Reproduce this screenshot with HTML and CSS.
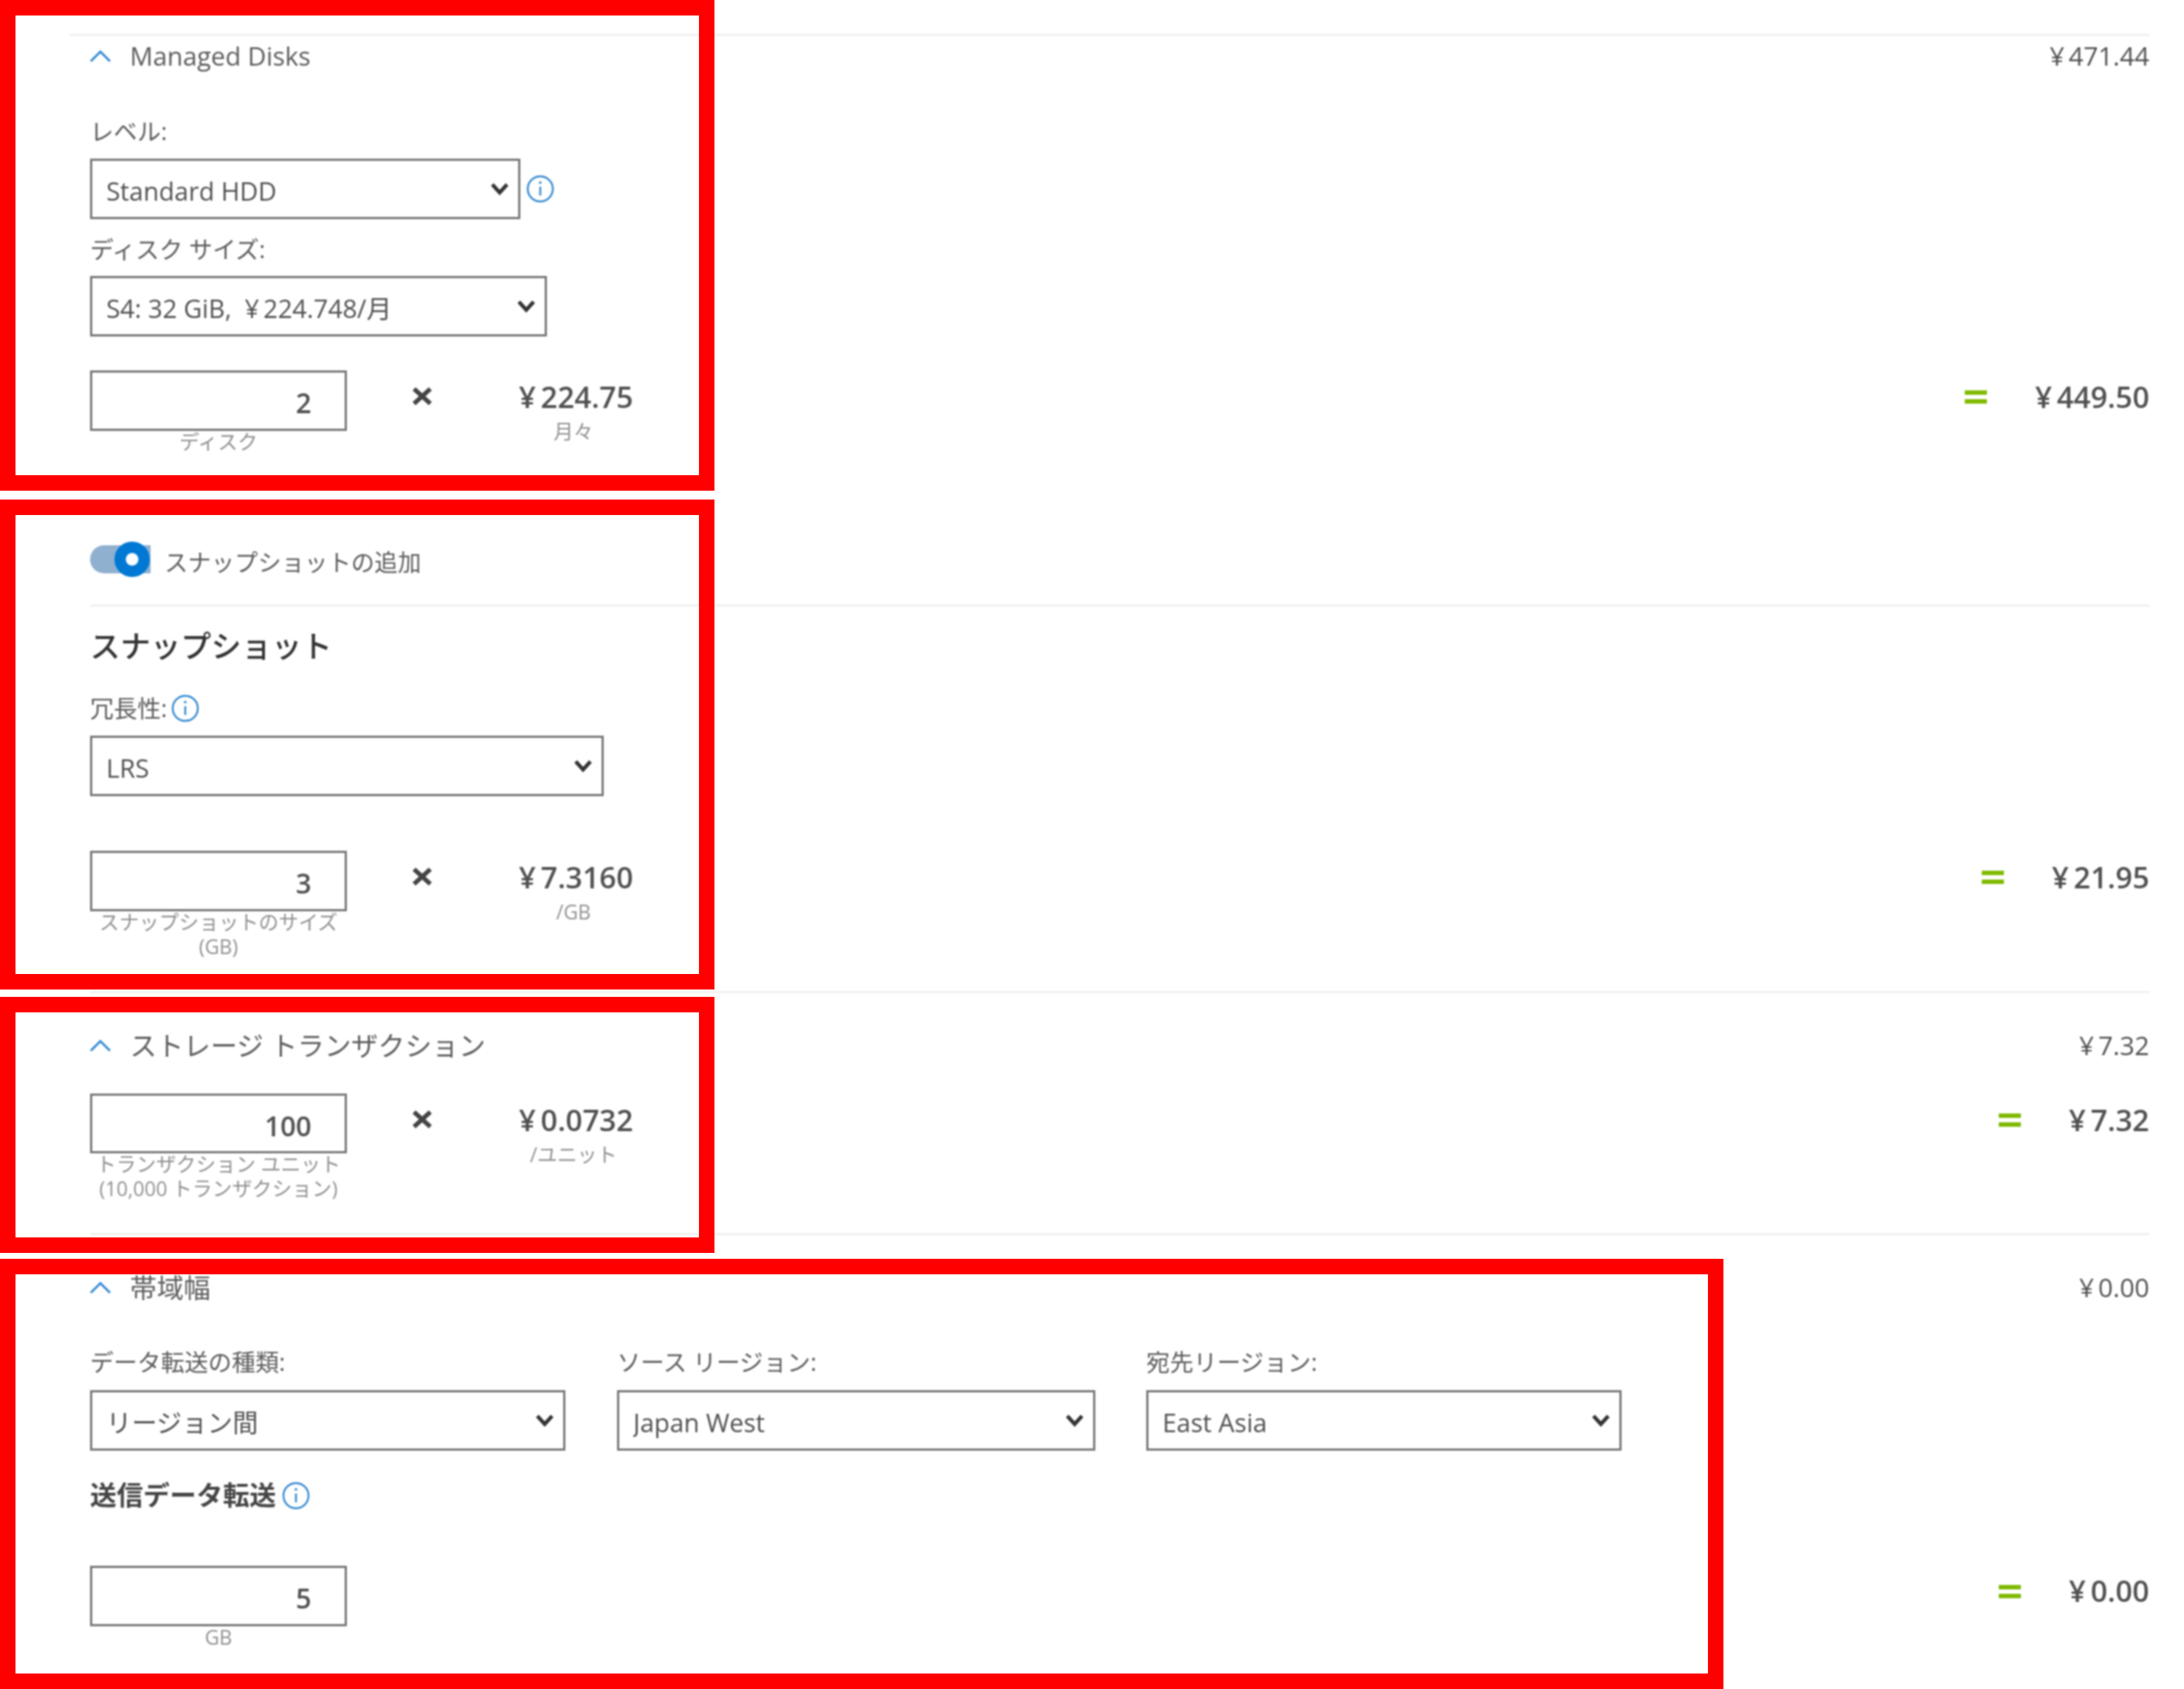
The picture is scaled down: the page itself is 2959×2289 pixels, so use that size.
FILE: index.html
```html
<!DOCTYPE html>
<html lang="ja">
<head>
<meta charset="utf-8">
<title>料金計算ツール</title>
<link rel="stylesheet" href="styles.css">
</head>
<body>
<div class="page">
  <main class="content">

    <section class="section section-first">
      <div class="head-row">
        <svg class="chev" width="30" height="18" viewBox="0 0 30 18"><polyline points="2,16 15,3 28,16"/></svg>
        <h3 class="head-title head-latin">Managed Disks</h3>
        <span class="head-total">¥&#8201;471.44</span>
      </div>
      <div class="label label-first">レベル:</div>
      <div class="select-line">
        <select class="select select-tier"><option>Standard HDD</option></select>
        <svg class="info info-side" width="38" height="38" viewBox="0 0 38 38"><circle cx="19" cy="19" r="17"/><line x1="19" y1="16" x2="19" y2="28"/><circle class="dot" cx="19" cy="10.5" r="1.8"/></svg>
      </div>
      <div class="label label-next">ディスク サイズ:</div>
      <select class="select select-size"><option>S4: 32 GiB,&nbsp; ¥&#8201;224.748/月</option></select>
      <div class="calc calc-disk">
        <div class="qty"><input class="num" type="text" value="2"><div class="sub">ディスク</div></div>
        <svg class="times" width="28" height="24" viewBox="0 0 28 24"><path d="M3 2 L25 22 M25 2 L3 22"/></svg>
        <div class="price"><div class="price-val">¥&#8201;224.75</div><div class="unit">月々</div></div>
        <div class="eq"></div>
        <div class="total">¥&#8201;449.50</div>
      </div>
      <div class="toggle-row">
        <span class="toggle"><span class="toggle-thumb"></span></span>
        <span class="toggle-text">スナップショットの追加</span>
      </div>
    </section>

    <section class="section section-snap">
      <h2 class="heading">スナップショット</h2>
      <div class="label label-info">冗長性:
        <svg class="info" width="38" height="38" viewBox="0 0 38 38"><circle cx="19" cy="19" r="17"/><line x1="19" y1="16" x2="19" y2="28"/><circle class="dot" cx="19" cy="10.5" r="1.8"/></svg>
      </div>
      <select class="select select-lrs"><option>LRS</option></select>
      <div class="calc calc-snap">
        <div class="qty"><input class="num" type="text" value="3"><div class="sub">スナップショットのサイズ<br>(GB)</div></div>
        <svg class="times" width="28" height="24" viewBox="0 0 28 24"><path d="M3 2 L25 22 M25 2 L3 22"/></svg>
        <div class="price"><div class="price-val">¥&#8201;7.3160</div><div class="unit">/GB</div></div>
        <div class="eq"></div>
        <div class="total">¥&#8201;21.95</div>
      </div>
    </section>

    <section class="section section-trans">
      <div class="head-row">
        <svg class="chev" width="30" height="18" viewBox="0 0 30 18"><polyline points="2,16 15,3 28,16"/></svg>
        <h3 class="head-title">ストレージ トランザクション</h3>
        <span class="head-total">¥&#8201;7.32</span>
      </div>
      <div class="calc calc-trans">
        <div class="qty"><input class="num num-short" type="text" value="100"><div class="sub">トランザクション ユニット<br>(10,000 トランザクション)</div></div>
        <svg class="times" width="28" height="24" viewBox="0 0 28 24"><path d="M3 2 L25 22 M25 2 L3 22"/></svg>
        <div class="price"><div class="price-val">¥&#8201;0.0732</div><div class="unit">/ユニット</div></div>
        <div class="eq"></div>
        <div class="total">¥&#8201;7.32</div>
      </div>
    </section>

    <section class="section section-band">
      <div class="head-row">
        <svg class="chev" width="30" height="18" viewBox="0 0 30 18"><polyline points="2,16 15,3 28,16"/></svg>
        <h3 class="head-title">帯域幅</h3>
        <span class="head-total">¥&#8201;0.00</span>
      </div>
      <div class="region-row">
        <div class="region region-a"><div class="label">データ転送の種類:</div><select class="select select-fill"><option>リージョン間</option></select></div>
        <div class="region region-b"><div class="label">ソース リージョン:</div><select class="select select-fill"><option>Japan West</option></select></div>
        <div class="region region-c"><div class="label">宛先リージョン:</div><select class="select select-fill"><option>East Asia</option></select></div>
      </div>
      <div class="bold-label">送信データ転送
        <svg class="info" width="38" height="38" viewBox="0 0 38 38"><circle cx="19" cy="19" r="17"/><line x1="19" y1="16" x2="19" y2="28"/><circle class="dot" cx="19" cy="10.5" r="1.8"/></svg>
      </div>
      <div class="calc calc-band">
        <div class="qty"><input class="num" type="text" value="5"><div class="sub">GB</div></div>
        <div class="eq eq-band"></div>
        <div class="total total-band">¥&#8201;0.00</div>
      </div>
    </section>
  </main>

  <div class="mark mark-1"></div>
  <div class="mark mark-2"></div>
  <div class="mark mark-3"></div>
  <div class="mark mark-4"></div>
</div>
</body>
</html>
```
FILE: styles.css
```css
* { box-sizing: border-box; }
html, body { margin: 0; padding: 0; background: #fff; }
body {
  font-family: "Open Sans", "Noto Sans CJK JP", sans-serif;
  color: #505050;
}
.page { position: relative; width: 2959px; height: 2289px; overflow: hidden; background: #fff; }
.content { padding-top: 46px; filter: blur(0.8px); }

.section { margin: 0 47px 0 122px; border-top: 3px solid #f0f0f0; }
.section-first { margin-left: 94px; padding-left: 28px; }
.section-snap { margin-top: 37px; padding-top: 25px; }
.section-trans { margin-top: 44px; padding-top: 44px; }
.section-band { margin-top: 44px; padding-top: 44px; }

.head-row { display: flex; align-items: center; height: 54px; }
.chev { flex: none; margin: 0 25px 0 -1px; }
.chev polyline { fill: none; stroke: #2f86d0; stroke-width: 3; }
.head-title { margin: 0; font-size: 36.4px; font-weight: 400; color: #5c5c5c; line-height: 54px; }
.head-latin { font-size: 34.7px; }
.head-total { margin-left: auto; font-size: 35px; line-height: 54px; color: #505050; }

.label { font-size: 32px; line-height: 40px; color: #5c5c5c; margin-bottom: 17px; }
.label-first { margin-top: 55px; }
.label-next { margin-top: 21px; margin-bottom: 16px; }
.label-info { display: flex; align-items: center; gap: 6px; margin-top: 37px; }
.heading { margin: 0; font-size: 41px; line-height: 56px; font-weight: 500; color: #333; }
.bold-label { display: flex; align-items: center; gap: 8px; margin-top: 39px; font-size: 36px; line-height: 44px; font-weight: 700; color: #444; }

.select {
  display: block;
  height: 82px;
  padding: 4px 44px 0 19px;
  border: 3px solid #777;
  border-radius: 0;
  background: #fff url("data:image/svg+xml,%3Csvg xmlns='http://www.w3.org/2000/svg' width='26' height='18' viewBox='0 0 26 18'%3E%3Cpolyline points='3,3 13,14 23,3' fill='none' stroke='%23333' stroke-width='5'/%3E%3C/svg%3E") no-repeat right 12px center;
  font-family: inherit;
  font-size: 34.4px;
  color: #505050;
  appearance: none;
  -webkit-appearance: none;
}
.select-line { display: flex; align-items: center; gap: 8px; }
.select-tier { width: 583px; }
.select-size { width: 619px; }
.select-lrs { width: 696px; }
.select-fill { width: 100%; }

.info { flex: none; }
.info circle { fill: none; stroke: #2f86d0; stroke-width: 2.5; }
.info line { stroke: #2f86d0; stroke-width: 2.5; }
.info .dot { fill: #2f86d0; stroke: none; }

.calc { display: flex; align-items: flex-start; }
.calc-disk { margin-top: 46px; }
.calc-snap { margin-top: 74px; }
.calc-trans { margin-top: 38px; }
.calc-band { margin-top: 73px; }

.qty { width: 348px; flex: none; }
.num {
  display: block;
  width: 100%;
  height: 82px;
  padding: 5px 45px 0 0;
  border: 3px solid #777;
  border-radius: 0;
  background: #fff;
  font-family: inherit;
  font-size: 37px;
  font-weight: 600;
  text-align: right;
  color: #505050;
}
.num-short { height: 81px; }
.sub { margin-top: -2px; font-size: 27px; line-height: 33px; text-align: center; color: #909090; white-space: nowrap; }

.times { flex: none; margin: 23px 117px 0 88px; }
.times path { fill: none; stroke: #444; stroke-width: 6; }
.price { flex: none; width: 154px; margin-top: 14px; }
.price-val { font-size: 40px; line-height: 44px; font-weight: 600; color: #505050; white-space: nowrap; }
.unit { width: 148px; margin-top: 8px; font-size: 27px; line-height: 33px; text-align: center; color: #909090; white-space: nowrap; }

.eq {
  flex: none;
  width: 30px;
  height: 18px;
  margin: 27px 65px 0 auto;
  border-top: 6px solid #7fba00;
  border-bottom: 6px solid #7fba00;
}
.total { flex: none; margin-top: 14px; font-size: 40px; line-height: 44px; font-weight: 600; color: #505050; white-space: nowrap; }
.eq-band { margin-top: 26px; }
.total-band { margin-top: 12px; }

.toggle-row { display: flex; align-items: center; gap: 19px; height: 48px; margin-top: 119px; }
.toggle { position: relative; display: block; flex: none; width: 82px; height: 38px; border-radius: 19px 0 0 19px; background: #8fb0cf; }
.toggle-thumb { position: absolute; top: -5px; right: 1px; width: 48px; height: 48px; border-radius: 50%; background: radial-gradient(circle, #fff 0 8px, #0078d4 9px); }
.toggle-text { padding-top: 8px; font-size: 31.6px; line-height: 40px; color: #5c5c5c; }

.region-row { display: flex; gap: 70px; margin-top: 54px; margin-right: 668px; }
.region .label { margin-bottom: 18px; white-space: nowrap; }
.region-a { width: 644px; }
.region-b { width: 648px; }
.region-c { width: 644px; margin-left: -1px; }

.mark { position: absolute; left: 0; width: 968px; border: 21px solid #f00; }
.mark-1 { top: 0; height: 665px; }
.mark-2 { top: 677px; height: 664px; }
.mark-3 { top: 1351px; height: 347px; }
.mark-4 { top: 1706px; height: 583px; width: 2335px; }
```
